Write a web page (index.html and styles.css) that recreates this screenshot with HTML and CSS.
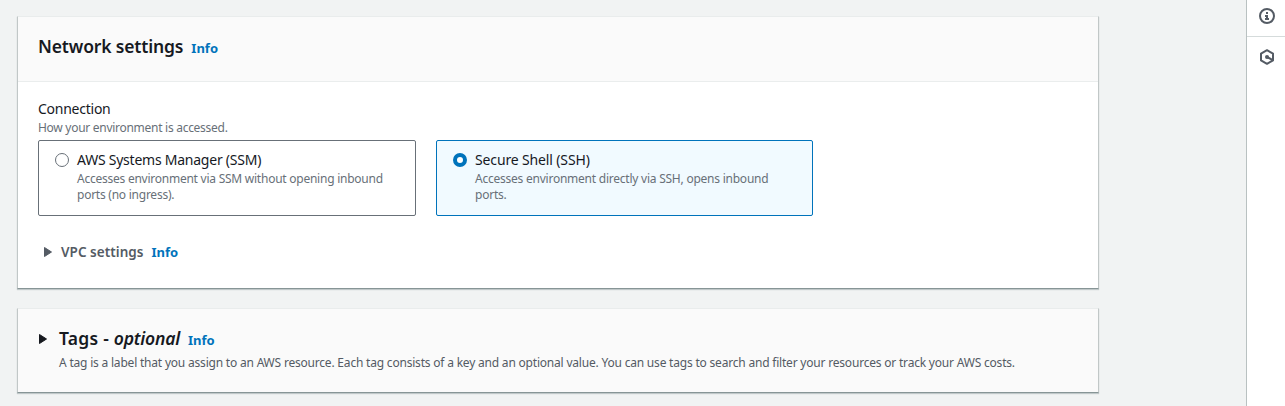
FILE: index.html
```html
<!DOCTYPE html>
<html lang="en">
<head>
<meta charset="utf-8">
<title>Network settings</title>
<link rel="stylesheet" href="styles.css">
</head>
<body>
<div class="layout">
  <main class="content">
    <section class="card">
      <header class="card-header">
        <h2 class="title"><span class="title-network">Network settings</span></h2>
        <a class="info">Info</a>
      </header>
      <div class="card-body">
        <div class="label">Connection</div>
        <div class="hint">How your environment is accessed.</div>
        <div class="tiles">
          <label class="tile">
            <span class="radio"></span>
            <span class="tile-text">
              <span class="tile-title t-ssm">AWS Systems Manager (SSM)</span>
              <span class="tile-desc d-ssm">Accesses environment via SSM without opening inbound<br>ports (no ingress).</span>
            </span>
          </label>
          <label class="tile tile-selected">
            <span class="radio radio-checked"></span>
            <span class="tile-text">
              <span class="tile-title t-ssh">Secure Shell (SSH)</span>
              <span class="tile-desc d-ssh">Accesses environment directly via SSH, opens inbound<br>ports.</span>
            </span>
          </label>
        </div>
        <div class="expander">
          <svg class="caret" width="8" height="10" viewBox="0 0 8 10"><path d="M.5.5 7.5 5 .5 9.5Z" fill="currentColor" stroke="currentColor" stroke-linejoin="round"/></svg>
          <span class="expander-title">VPC settings</span>
          <a class="info">Info</a>
        </div>
      </div>
    </section>
    <section class="card card-tags">
      <div class="tags-row">
        <svg class="caret" width="8" height="10" viewBox="0 0 8 10"><path d="M.5.5 7.5 5 .5 9.5Z" fill="currentColor" stroke="currentColor" stroke-linejoin="round"/></svg>
        <h2 class="title"><span class="title-tags">Tags - </span><em class="optional">optional</em></h2>
        <a class="info">Info</a>
      </div>
      <p class="tags-desc">A tag is a label that you assign to an AWS resource. Each tag consists of a key and an optional value. You can use tags to search and filter your resources or track your AWS costs.</p>
    </section>
  </main>
  <aside class="rail">
    <div class="rail-item rail-info">
      <svg width="16" height="16" viewBox="0 0 16 16" fill="none" stroke="currentColor" stroke-width="2"><circle cx="8" cy="8" r="7"/><path d="M7 5h2M6 8h2M8 7v4M6 11h4"/></svg>
    </div>
    <div class="rail-item rail-hex">
      <svg width="16" height="16" viewBox="0 0 16 16" fill="none" stroke="currentColor" stroke-width="2" stroke-linejoin="round"><path d="M8 1.2 14 4.6v6.8L8 14.8 2 11.4V4.6Z"/><path d="m8 8 5.5 3"/><circle cx="8" cy="8" r="2" fill="currentColor" stroke="none"/></svg>
    </div>
  </aside>
</div>
</body>
</html>
```
FILE: styles.css
```css
* { box-sizing: border-box; }
body {
  margin: 0;
  height: 406px;
  overflow: hidden;
  background: #f1f3f3;
  color: #16191f;
  font-family: "Noto Sans", "Open Sans", sans-serif;
  font-size: 14px;
}
.layout { display: flex; height: 406px; }
.content {
  flex: 1;
  display: flex;
  flex-direction: column;
  gap: 19px;
  padding: 16px 147px 0 17px;
}
.card {
  height: 273px;
  background: #fff;
  border: 1px solid #c1c7c7;
  border-top-color: #e9ecec;
  border-bottom-color: #879596;
  box-shadow: 0 1px 1px rgba(0, 28, 36, .2);
}
.card-header {
  display: flex;
  align-items: flex-start;
  gap: 8px;
  height: 65px;
  padding: 17px 20px 0;
  background: #fafafa;
  border-bottom: 1px solid #eaeded;
}
.card-header .info { margin-top: 4px; }
.title { margin: 0; font-size: 17.5px; line-height: 24px; font-weight: 600; white-space: pre; }
.title-network { letter-spacing: -.15px; }
.title-tags { letter-spacing: .25px; }
.optional { letter-spacing: -.2px; }
.info { color: #0073bb; font-size: 13px; line-height: 20px; font-weight: 700; }
.card-body { padding: 17px 20px 0; }
.label { font-size: 14px; line-height: 20px; letter-spacing: -.25px; }
.hint { margin-top: 1px; color: #687078; font-size: 12px; line-height: 16px; letter-spacing: -.28px; }
.tiles { display: flex; gap: 20px; margin-top: 4px; }
.tile {
  display: flex;
  gap: 8px;
  width: 378px;
  height: 76px;
  padding: 9px 16px;
  border: 1px solid #687078;
  border-radius: 2px;
}
.tile-selected { width: 377px; border-color: #0073bb; background: #f1faff; }
.radio {
  width: 14px;
  height: 14px;
  margin-top: 3px;
  border: 1px solid #687078;
  border-radius: 50%;
  background: #fff;
}
.radio-checked { border: 4px solid #0073bb; }
.tile-text { display: flex; flex-direction: column; white-space: nowrap; }
.tile-title { font-size: 14px; line-height: 20px; }
.t-ssm { letter-spacing: -.24px; }
.t-ssh { letter-spacing: -.14px; }
.tile-desc { margin-top: 1px; color: #687078; font-size: 12px; line-height: 16px; }
.d-ssm { letter-spacing: -.245px; }
.d-ssh { letter-spacing: -.235px; }
.expander { display: flex; align-items: center; margin-top: 26px; padding-left: 6px; color: #545b64; }
.expander-title { margin: 0 8px 0 9px; font-size: 13.5px; line-height: 20px; font-weight: 600; letter-spacing: .04px; }
.card-tags { height: 85px; padding: 17px 20px 0; background: #fafafa; }
.tags-row { display: flex; align-items: center; padding-left: 1px; }
.tags-row .title { margin: 0 8px 0 12px; }
.tags-row .caret { margin-top: 1px; }
.tags-row .info { margin-top: 3px; }
.tags-desc { margin: 5px 0 0 21px; color: #545b64; font-size: 12px; line-height: 16px; letter-spacing: -.2px; white-space: nowrap; }
.rail { width: 39px; background: #fff; border-left: 1px solid #b9c1c1; color: #545b64; }
.rail-item { padding-left: 12px; }
.rail-item svg { display: block; }
.rail-info { height: 37px; padding-top: 8px; border-bottom: 1px solid #d5dbdb; }
.rail-hex { padding-top: 12px; }
```
